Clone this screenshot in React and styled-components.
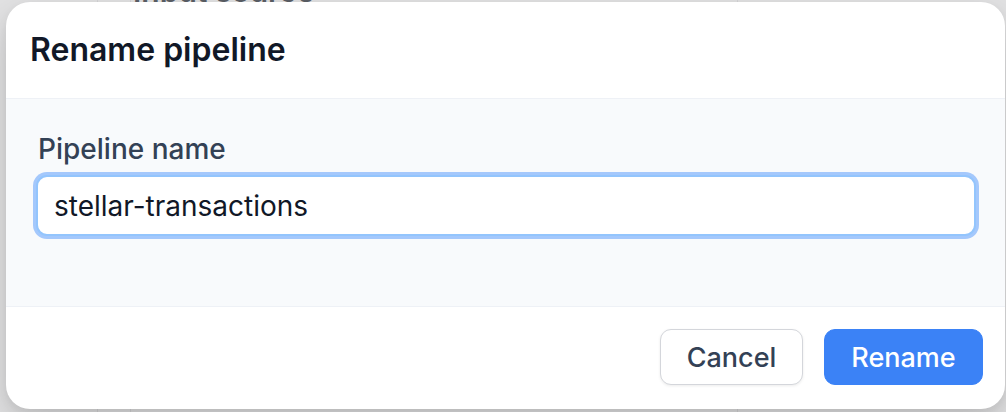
import React from "react";
import styled, { createGlobalStyle } from "styled-components";

const Global = createGlobalStyle`
  html, body { margin: 0; padding: 0; }
  body {
    width: 1006px;
    height: 412px;
    overflow: hidden;
    background: #e3e3e4;
    font-family: Inter, "Noto Sans", sans-serif;
    -webkit-font-smoothing: antialiased;
  }
  * { box-sizing: border-box; }
`;

const Backdrop = styled.div`
  position: relative;
  width: 1006px;
  height: 412px;
  overflow: hidden;
  background: #e2e2e3;
`;

const BehindText = styled.div`
  position: absolute;
  left: 133px;
  top: -27px;
  font-size: 30px;
  font-weight: 600;
  color: #5b5f66;
  white-space: nowrap;
`;

const BehindLine = styled.div`
  position: absolute;
  top: 0;
  bottom: 0;
  left: ${(p) => p.$x}px;
  width: 1px;
  background: #d4d4d6;
`;

const Dialog = styled.div`
  position: absolute;
  left: 6px;
  top: 2px;
  width: 999px;
  height: 407px;
  background: #ffffff;
  border-radius: 24px;
  box-shadow: 0 16px 40px rgba(0, 0, 0, 0.16), 0 4px 10px rgba(0, 0, 0, 0.06);
  display: flex;
  flex-direction: column;
  overflow: hidden;
`;

const Header = styled.div`
  height: 97px;
  flex: none;
  display: flex;
  align-items: center;
  padding: 0 24px;
  border-bottom: 1px solid #eef1f6;
`;

const Title = styled.h2`
  margin: 0;
  font-size: 32px;
  line-height: 1.2;
  font-weight: 600;
  color: #111827;
`;

const Body = styled.div`
  flex: 1;
  background: #f8fafc;
  padding: 33px 29px 0 30px;
  display: flex;
  flex-direction: column;
  border-bottom: 1px solid #eef1f6;
`;

const Label = styled.label`
  font-size: 28px;
  line-height: 34px;
  font-weight: 500;
  color: #334155;
  padding-left: 2px;
  margin-bottom: 9px;
`;

const Input = styled.input`
  height: 61px;
  width: 100%;
  border: 2px solid #93c5fd;
  box-shadow: 0 0 0 3px #a4c8fc;
  border-radius: 11px;
  background: #ffffff;
  font-family: inherit;
  font-size: 28px;
  color: #111827;
  padding: 0 16px;
  outline: none;
`;

const Footer = styled.div`
  height: 102px;
  flex: none;
  display: flex;
  align-items: center;
  justify-content: flex-end;
  gap: 21px;
  padding: 0 22px 2px 0;
`;

const Button = styled.button`
  height: 56px;
  padding: 0 25px;
  min-width: ${(p) => (p.$primary ? "159px" : "143px")};
  border-radius: 11px;
  font-family: inherit;
  font-size: 27px;
  font-weight: 500;
  cursor: pointer;
  border: ${(p) => (p.$primary ? "1px solid #3b82f6" : "1.5px solid #d4d6db")};
  background: ${(p) => (p.$primary ? "#3b82f6" : "#ffffff")};
  color: ${(p) => (p.$primary ? "#ffffff" : "#334155")};
  box-shadow: ${(p) => (p.$primary ? "none" : "0 1px 3px rgba(0,0,0,0.08)")};
`;

export default function App() {
  return (
    <>
      <Global />
      <Backdrop>
        <BehindLine $x={97} />
        <BehindLine $x={130} />
        <BehindLine $x={737} />
        <BehindText>Input source</BehindText>
        <Dialog role="dialog" aria-labelledby="rename-title">
          <Header>
            <Title id="rename-title">Rename pipeline</Title>
          </Header>
          <Body>
            <Label htmlFor="pipeline-name">Pipeline name</Label>
            <Input id="pipeline-name" defaultValue="stellar-transactions" />
          </Body>
          <Footer>
            <Button>Cancel</Button>
            <Button $primary>Rename</Button>
          </Footer>
        </Dialog>
      </Backdrop>
    </>
  );
}
